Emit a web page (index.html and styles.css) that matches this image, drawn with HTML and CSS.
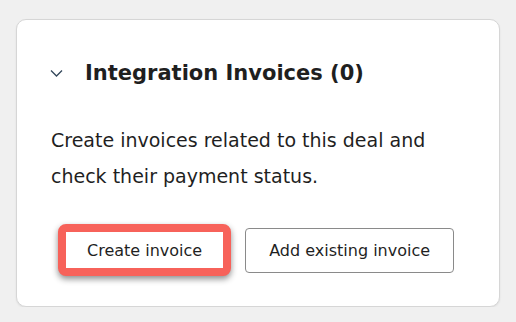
FILE: index.html
```html
<!DOCTYPE html>
<html lang="en">
<head>
    <meta charset="UTF-8">
    <meta name="viewport" content="width=device-width, initial-scale=1.0">
    <title>Integration Invoices</title>
    <link rel="stylesheet" href="styles.css">
</head>
<body>
    <div class="card">
        <!-- Collapsible header -->
        <div class="card-header">
            <svg class="chevron" width="13" height="8" viewBox="0 0 13 8">
                <path d="M1 1.5 L6.5 7 L12 1.5" fill="none" stroke="#33475b" stroke-width="1.3"/>
            </svg>
            <h2>Integration Invoices (0)</h2>
        </div>

        <p class="description">Create invoices related to this deal and check their payment status.</p>

        <div class="actions">
            <button class="btn highlighted">Create invoice</button>
            <button class="btn">Add existing invoice</button>
        </div>
    </div>
</body>
</html>
```

FILE: styles.css
```css
body {
    margin: 0;
    padding: 19px 16px 0;
    background-color: #f0f0f0;
    font-family: "DejaVu Sans", sans-serif;
    color: #1f1f1f;
}
.card {
    width: 484px;
    height: 288px;
    box-sizing: border-box;
    background: white;
    border: 1px solid #d6d6d6;
    border-radius: 10px;
    box-shadow: 0 1px 2px rgba(0, 0, 0, 0.08);
    padding: 36px 34px 0;
}
.card-header {
    display: flex;
    align-items: center;
    gap: 22px;
    margin-left: -1px;
}
.chevron {
    display: block;
}
.card-header h2 {
    margin: 0;
    font-size: 21px;
    font-weight: 700;
    line-height: 34px;
}
.description {
    margin: 32px 0 0;
    font-size: 19px;
    line-height: 36px;
    width: 400px;
}
.actions {
    display: flex;
    align-items: center;
    gap: 14px;
    margin-top: 30px;
    padding-left: 7px;
}
.btn {
    font-family: inherit;
    font-size: 16px;
    color: #1f1f1f;
    background: white;
    border: 1px solid #8a8a8a;
    border-radius: 4px;
    height: 45px;
    padding: 0 23px;
}
.btn.highlighted {
    height: 52px;
    border: 8px solid #f7625a;
    border-radius: 8px;
    padding: 0 21px;
    box-shadow: 0 3px 6px rgba(0, 0, 0, 0.45);
}
```
